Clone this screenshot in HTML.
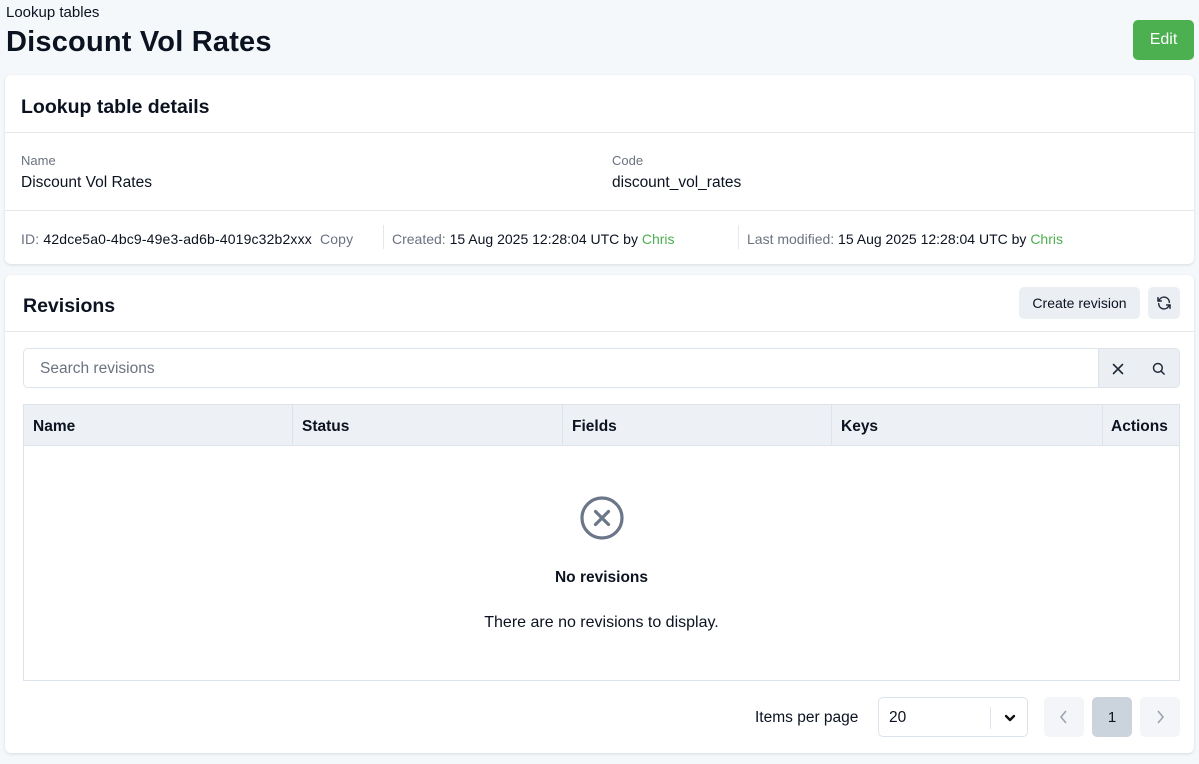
<!DOCTYPE html>
<html><head><meta charset="utf-8"><style>
*{box-sizing:border-box;margin:0;padding:0}
body{width:1199px;height:764px;background:#f5f8fb;font-family:"Liberation Sans",sans-serif;color:#0b1220;position:relative;overflow:hidden}
.abs{position:absolute}
.card{position:absolute;background:#fff;border-radius:6px;box-shadow:0 1px 3px rgba(0,0,0,.12)}
.lbl{color:#6b7280;font-size:13px}
.val{font-size:15.5px}
.btn{position:absolute;background:#ebeff4;border-radius:5px;font-size:14px;display:flex;align-items:center;justify-content:center}
.th{position:absolute;top:0;height:41px;line-height:43px;font-weight:bold;font-size:15.5px;padding-left:9px;border-right:1px solid #dde3ea}
</style></head><body>
<div class="abs" style="left:6px;top:4px;font-size:15px">Lookup tables</div>
<div class="abs" style="left:6px;top:26px;font-size:29px;font-weight:bold;letter-spacing:0.2px">Discount Vol Rates</div>
<div class="abs" style="left:1133px;top:20px;width:61px;height:40px;background:#4caf50;border-radius:5px;color:#fff;font-size:16px;display:flex;align-items:center;justify-content:center">Edit</div>

<div class="card" style="left:5px;top:75px;width:1189px;height:189px">
 <div class="abs" style="left:16px;top:21px;font-size:19.5px;font-weight:bold">Lookup table details</div>
 <div class="abs" style="left:0;top:57px;width:100%;border-top:1px solid #e5e7eb"></div>
 <div class="abs lbl" style="left:16px;top:78px">Name</div>
 <div class="abs val" style="left:16px;top:99px">Discount Vol Rates</div>
 <div class="abs lbl" style="left:607px;top:78px">Code</div>
 <div class="abs val" style="left:607px;top:99px">discount_vol_rates</div>
 <div class="abs" style="left:0;top:135px;width:100%;border-top:1px solid #e5e7eb"></div>
 <div class="abs" style="left:16px;top:156px;font-size:14px;letter-spacing:0.15px;white-space:nowrap"><span style="color:#6b7280">ID:</span> 42dce5a0-4bc9-49e3-ad6b-4019c32b2xxx&nbsp;&nbsp;<span style="color:#6b7280">Copy</span></div>
 <div class="abs" style="left:378px;top:150px;height:24px;border-left:1px solid #e5e7eb"></div>
 <div class="abs" style="left:387px;top:156px;font-size:14px;white-space:nowrap"><span style="color:#6b7280">Created:</span> 15 Aug 2025 12:28:04 UTC by <span style="color:#4caf50">Chris</span></div>
 <div class="abs" style="left:733px;top:150px;height:24px;border-left:1px solid #e5e7eb"></div>
 <div class="abs" style="left:742px;top:156px;font-size:14px;white-space:nowrap"><span style="color:#6b7280">Last modified:</span> 15 Aug 2025 12:28:04 UTC by <span style="color:#4caf50">Chris</span></div>
</div>

<div class="card" style="left:5px;top:275px;width:1189px;height:478px">
 <div class="abs" style="left:18px;top:20px;font-size:19.5px;font-weight:bold">Revisions</div>
 <div class="btn" style="left:1014px;top:12px;width:121px;height:32px">Create revision</div>
 <div class="btn" style="left:1143px;top:12px;width:32px;height:32px"><svg width="16" height="16" viewBox="0 0 24 24" fill="none" stroke="#1f2937" stroke-width="2.2" stroke-linecap="round" stroke-linejoin="round"><path d="M20 11A8 8 0 0 0 5.5 6.5L3 9"/><path d="M3 4v5h5"/><path d="M4 13a8 8 0 0 0 14.5 4.5L21 15"/><path d="M21 20v-5h-5"/></svg></div>
 <div class="abs" style="left:0;top:56px;width:100%;border-top:1px solid #e5e7eb"></div>
 <div class="abs" style="left:18px;top:73px;width:1157px;height:40px;border:1px solid #dde3ea;border-radius:5px;overflow:hidden">
  <div class="abs" style="left:16px;top:11px;font-size:15.5px;color:#6b7280">Search revisions</div>
  <div class="abs" style="left:1074px;top:0;width:83px;height:40px;background:#ebeff4;border-left:1px solid #dde3ea"></div>
  <svg class="abs" style="left:1088px;top:14px" width="12" height="12" viewBox="0 0 12 12" fill="none" stroke="#1f2937" stroke-width="1.6" stroke-linecap="round"><path d="M1.5 1.5l9 9M10.5 1.5l-9 9"/></svg>
  <svg class="abs" style="left:1127px;top:12px" width="15" height="15" viewBox="0 0 24 24" fill="none" stroke="#1f2937" stroke-width="2.4" stroke-linecap="round"><circle cx="11" cy="11" r="7"/><path d="M16 16l5 5"/></svg>
 </div>
 <div class="abs" style="left:18px;top:129px;width:1157px;height:277px;border:1px solid #dde3ea">
  <div class="abs" style="left:0;top:0;width:100%;height:41px;background:#edf1f6;border-bottom:1px solid #dde3ea"></div>
  <div class="th" style="left:0;width:269px">Name</div>
  <div class="th" style="left:269px;width:270px">Status</div>
  <div class="th" style="left:539px;width:269px">Fields</div>
  <div class="th" style="left:808px;width:271px">Keys</div>
  <div class="th" style="left:1079px;width:78px;border:none;padding-left:8px">Actions</div>
  <svg class="abs" style="left:555px;top:90px" width="46" height="46" viewBox="0 0 46 46" fill="none" stroke="#6b7689" stroke-width="3.2" stroke-linecap="round"><circle cx="23" cy="23" r="20"/><path d="M16.5 16.5l13 13M29.5 16.5l-13 13"/></svg>
  <div class="abs" style="left:0;top:164px;width:100%;text-align:center;font-size:15.5px;font-weight:bold">No revisions</div>
  <div class="abs" style="left:0;top:209px;width:100%;text-align:center;font-size:16px">There are no revisions to display.</div>
 </div>
 <div class="abs" style="left:750px;top:434px;font-size:15.5px">Items per page</div>
 <div class="abs" style="left:873px;top:422px;width:150px;height:40px;border:1px solid #dde3ea;border-radius:5px">
  <div class="abs" style="left:10px;top:11px;font-size:15.5px">20</div>
  <div class="abs" style="left:111px;top:9px;height:22px;border-left:1px solid #dde3ea"></div>
  <svg class="abs" style="left:124px;top:14px" width="14" height="12" viewBox="0 0 14 12" fill="none" stroke="#111" stroke-width="2.4" stroke-linecap="round" stroke-linejoin="round"><path d="M3 4l4 4 4-4"/></svg>
 </div>
 <div class="btn" style="left:1039px;top:422px;width:40px;height:40px;background:#f3f5f8"><svg width="12" height="16" viewBox="0 0 12 16" fill="none" stroke="#9ca3af" stroke-width="1.6"><path d="M8 2L3 8l5 6"/></svg></div>
 <div class="btn" style="left:1087px;top:422px;width:40px;height:40px;background:#cbd3dd;font-size:15px">1</div>
 <div class="btn" style="left:1135px;top:422px;width:40px;height:40px;background:#f3f5f8"><svg width="12" height="16" viewBox="0 0 12 16" fill="none" stroke="#9ca3af" stroke-width="1.6"><path d="M4 2l5 6-5 6"/></svg></div>
</div>
</body></html>
